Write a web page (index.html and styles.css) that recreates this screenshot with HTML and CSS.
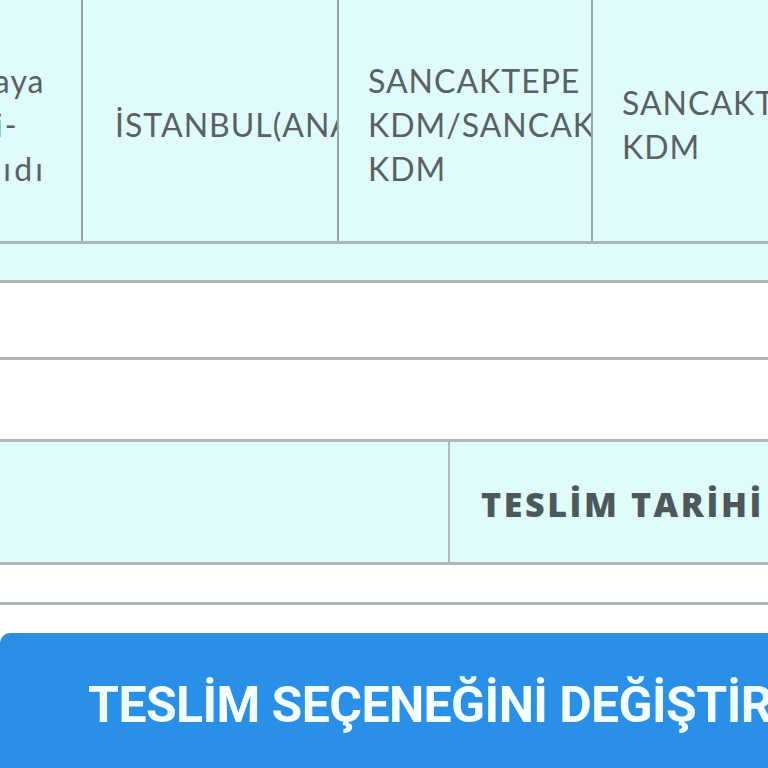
FILE: index.html
```html
<!DOCTYPE html>
<html lang="tr">
<head>
<meta charset="utf-8">
<title>Teslim</title>
<link rel="stylesheet" href="styles.css">
</head>
<body>
<div class="sheet">
  <div class="row row-top">
    <div class="cell c1"><span class="lines"><span class="l1">Kasaya</span><br><span class="l2">Telli-</span><br><span class="l3">Kâğıdı</span></span></div>
    <div class="cell c2">İSTANBUL(ANADOLU)</div>
    <div class="cell c3">SANCAKTEPE KDM/SANCAKTEPE KDM</div>
    <div class="cell c4">SANCAKTEPE KDM</div>
  </div>
  <div class="row row-strip"></div>
  <div class="row row-blank1"></div>
  <div class="row row-blank2"></div>
  <div class="row row-head">
    <div class="cell h1"></div>
    <div class="cell h2">TESLİM TARİHİ</div>
  </div>
  <div class="row row-blank3"></div>
  <div class="gap"></div>
  <button class="change-btn">TESLİM SEÇENEĞİNİ DEĞİŞTİR</button>
</div>
</body>
</html>
```

FILE: styles.css
```css
* { box-sizing: border-box; }
html, body {
  margin: 0;
  padding: 0;
  width: 768px;
  height: 768px;
  overflow: hidden;
  background: #ffffff;
}
.sheet {
  width: 1100px;
  margin-left: -170px;
  font-family: "Lato", "Open Sans", sans-serif;
  color: #596163;
}
.row {
  display: flex;
  border-bottom: 3px solid #b0b6b6;
}
.row-top {
  height: 244px;
  background: #e0fcfa;
}
.cell {
  display: flex;
  align-items: center;
  overflow: hidden;
  padding: 0 30px;
}
.c1, .c2, .c3, .c4 {
  font-size: 32px;
  line-height: 44px;
  letter-spacing: 1px;
  padding-top: 8px;
}
.c1 { width: 251px; padding-left: 110px; }
.c2 { width: 256px; border-left: 2px solid #9aa4a4; padding-left: 32px; }
.c3 { width: 254px; border-left: 2px solid #9aa4a4; padding-left: 29px; }
.c4 { width: 339px; border-left: 2px solid #9aa4a4; padding-left: 29px; }
.c2 { white-space: nowrap; }
.lines { white-space: nowrap; }
.l2 { letter-spacing: 2px; }
.l3 { letter-spacing: 3.2px; }
.row-strip { height: 39px; background: #e0fcfa; }
.row-blank1 { height: 77px; }
.row-blank2 { height: 82px; }
.row-head { height: 123px; background: #e0fcfa; }
.h1 { width: 618px; }
.h2 {
  flex: 1;
  border-left: 2px solid #b2baba;
  padding-left: 31px;
  padding-top: 4px;
  font-family: "Open Sans", "Lato", sans-serif;
  font-weight: 800;
  font-size: 34px;
  letter-spacing: 2.6px;
  color: #4d585b;
  white-space: nowrap;
}
.row-blank3 { height: 40px; }
.gap { height: 28px; }
.change-btn {
  display: block;
  width: 1000px;
  height: 160px;
  margin-left: 170px;
  border: 0;
  border-radius: 10px;
  background: #2a8fe6;
  color: #f2feff;
  font-family: "Roboto", "Liberation Sans", sans-serif;
  font-weight: 700;
  font-size: 50px;
  letter-spacing: -0.6px;
  text-align: left;
  padding: 0 0 16px 88px;
}
```
